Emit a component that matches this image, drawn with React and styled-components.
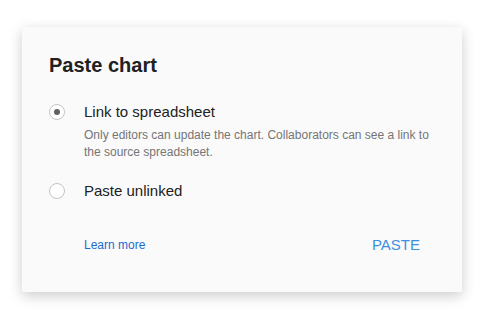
import React, { useState } from "react";
import styled, { createGlobalStyle } from "styled-components";

const Global = createGlobalStyle`
  html, body { margin: 0; padding: 0; background: #fff; }
  body { font-family: "Liberation Sans", Arial, sans-serif; }
`;

const Page = styled.div`
  width: 486px;
  height: 325px;
  padding: 27px 0 0 22px;
  box-sizing: border-box;
`;

const Dialog = styled.div`
  width: 440px;
  height: 265px;
  box-sizing: border-box;
  background: #fafafa;
  border-radius: 2px;
  box-shadow: 0 4px 14px rgba(0, 0, 0, 0.2);
  padding: 26px 24px 0 27px;
  display: flex;
  flex-direction: column;
`;

const Title = styled.h1`
  margin: 0;
  font-size: 20px;
  line-height: 24px;
  font-weight: bold;
  color: #212121;
`;

const Options = styled.div`
  margin-top: 26px;
  display: flex;
  flex-direction: column;
  gap: 21px;
`;

const Option = styled.label`
  display: grid;
  grid-template-columns: 16px 1fr;
  column-gap: 19px;
  align-items: center;
  cursor: pointer;
`;

const Radio = styled.span`
  width: 16px;
  height: 16px;
  box-sizing: border-box;
  border-radius: 50%;
  border: 1px solid #c4c4c4;
  background: #fff;
  display: flex;
  align-items: center;
  justify-content: center;

  &::after {
    content: "";
    width: 6px;
    height: 6px;
    border-radius: 50%;
    background: ${(p) => (p.$checked ? "#616161" : "transparent")};
  }
`;

const Label = styled.span`
  font-size: 15px;
  line-height: 18px;
  color: #212121;
`;

const Hint = styled.p`
  grid-column: 2;
  margin: 6px 0 0;
  font-size: 12px;
  line-height: 17px;
  color: #757575;
`;

const Footer = styled.div`
  margin-top: auto;
  margin-bottom: 39px;
  padding: 0 18px 0 35px;
  display: flex;
  align-items: center;
  justify-content: space-between;
`;

const LearnMore = styled.a`
  font-size: 12px;
  color: #1a6cd0;
  text-decoration: none;
`;

const Action = styled.button`
  border: none;
  background: none;
  padding: 0;
  font-family: inherit;
  font-size: 15px;
  color: #3d8fe0;
  text-transform: uppercase;
  cursor: pointer;
`;

const options = [
  {
    id: "link",
    label: "Link to spreadsheet",
    hint: "Only editors can update the chart. Collaborators can see a link to the source spreadsheet.",
  },
  { id: "unlinked", label: "Paste unlinked" },
];

export default function App() {
  const [choice, setChoice] = useState("link");
  return (
    <Page>
      <Global />
      <Dialog>
        <Title>Paste chart</Title>
        <Options>
          {options.map((o) => (
            <Option key={o.id} onClick={() => setChoice(o.id)}>
              <Radio $checked={choice === o.id} />
              <Label>{o.label}</Label>
              {o.hint && <Hint>{o.hint}</Hint>}
            </Option>
          ))}
        </Options>
        <Footer>
          <LearnMore href="#">Learn more</LearnMore>
          <Action>Paste</Action>
        </Footer>
      </Dialog>
    </Page>
  );
}
